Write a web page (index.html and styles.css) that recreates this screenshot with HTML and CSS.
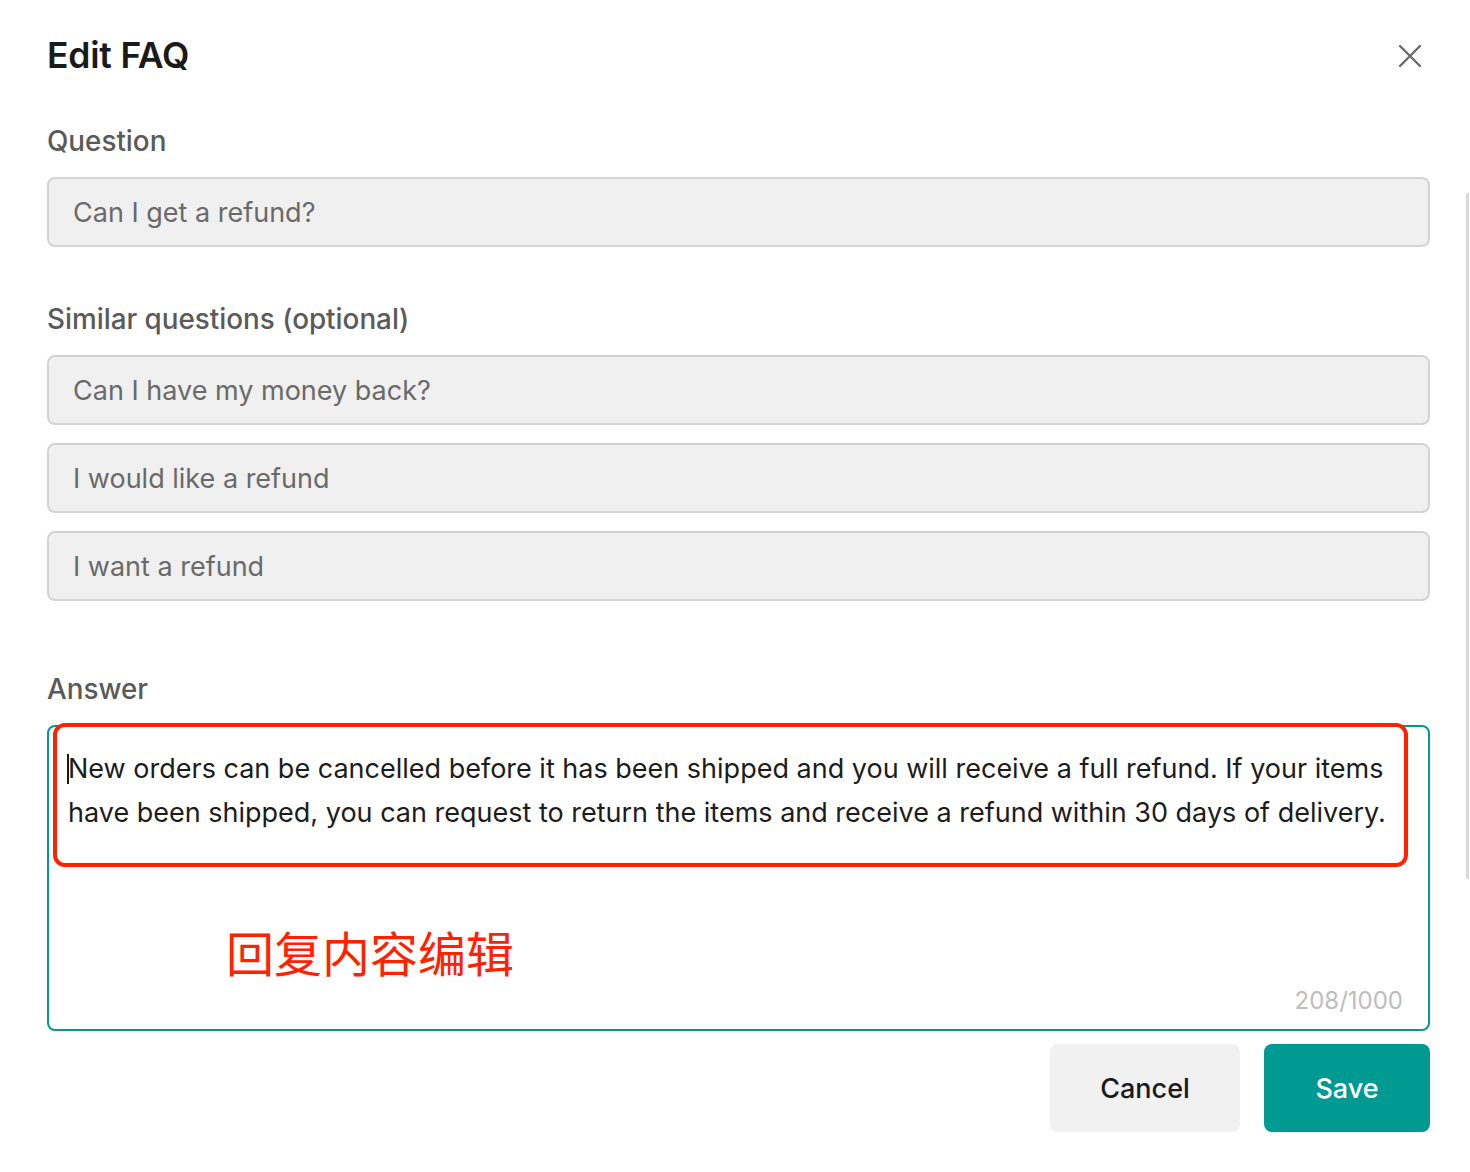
FILE: index.html
```html
<!DOCTYPE html>
<html lang="en">
<head>
<meta charset="utf-8">
<title>Edit FAQ</title>
<link rel="stylesheet" href="styles.css">
</head>
<body>
<div class="modal">
  <header class="modal-header">
    <h1 class="title">Edit FAQ</h1>
    <button class="close" aria-label="Close">
      <svg width="24" height="24" viewBox="0 0 24 24"><path d="M2 2L22 22M22 2L2 22" stroke="#6b6b6b" stroke-width="2.4" stroke-linecap="round" fill="none"/></svg>
    </button>
  </header>

  <div class="field">
    <div class="label">Question</div>
    <div class="input">Can I get a refund?</div>
  </div>

  <div class="field field-similar">
    <div class="label">Similar questions (optional)</div>
    <div class="input-list">
      <div class="input">Can I have my money back?</div>
      <div class="input">I would like a refund</div>
      <div class="input">I want a refund</div>
    </div>
  </div>

  <div class="field field-answer">
    <div class="label">Answer</div>
    <div class="textarea">
      <p class="answer-text"><span class="caret"></span>New orders can be cancelled before it has been shipped and you will receive a full refund. If your items have been shipped, you can request to return the items and receive a refund within 30 days of delivery.</p>
      <div class="counter">208/1000</div>
      <div class="mark-box"></div>
      <div class="mark-note">回复内容编辑</div>
    </div>
  </div>

  <div class="actions">
    <button class="btn btn-cancel">Cancel</button>
    <button class="btn btn-save">Save</button>
  </div>
</div>
<div class="scrollbar"></div>
</body>
</html>
```

FILE: styles.css
```css
* { box-sizing: border-box; }
html, body { margin: 0; padding: 0; background: #fff; }
body {
  font-family: Inter, "Noto Sans", "Liberation Sans", sans-serif;
  color: #1a1a1a;
  width: 1470px;
  height: 1172px;
  overflow: hidden;
  position: relative;
}
.modal {
  padding: 36px 40px 0 47px;
}
.modal-header {
  display: flex;
  align-items: center;
  justify-content: space-between;
  height: 40px;
}
.title {
  margin: 0;
  font-size: 35.5px;
  line-height: 40px;
  font-weight: 600;
  color: #1a1a1a;
  letter-spacing: -0.2px;
}
.close {
  border: 0;
  background: none;
  padding: 0;
  width: 24px;
  height: 24px;
  margin-right: 8px;
  display: flex;
}
.field { margin-top: 47px; }
.field-similar { margin-top: 54px; }
.field-answer { margin-top: 70px; }
.label {
  font-size: 27.8px;
  line-height: 36px;
  font-weight: 500;
  color: #5a5a5a;
  margin-bottom: 18px;
}
.input-list {
  display: flex;
  flex-direction: column;
  gap: 18px;
}
.input {
  height: 70px;
  background: #f0f0f0;
  border: 2px solid #d3d3d3;
  border-radius: 8px;
  padding: 0 24px;
  display: flex;
  align-items: center;
  font-size: 27px;
  color: #6a6a6a;
}
.textarea {
  position: relative;
  height: 306px;
  border: 2px solid #009a93;
  border-radius: 8px;
  padding: 20px 19px 0 19px;
}
.answer-text {
  margin: 0;
  font-size: 27px;
  line-height: 44px;
  color: #1c1c1c;
  position: relative;
}
.caret {
  position: absolute;
  left: -1px;
  top: 7px;
  width: 2px;
  height: 30px;
  background: #1a1a1a;
}
.counter {
  position: absolute;
  right: 25px;
  bottom: 14px;
  font-size: 24px;
  line-height: 28px;
  color: #bdbdbd;
}
.mark-box {
  position: absolute;
  left: 4px;
  top: -4px;
  width: 1355px;
  height: 144px;
  border: 4px solid #ff2200;
  border-radius: 12px;
}
.mark-note {
  position: absolute;
  left: 177px;
  top: 196px;
  font-family: "Noto Sans CJK SC", sans-serif;
  font-size: 48px;
  line-height: 56px;
  color: #ff2200;
}
.actions {
  display: flex;
  justify-content: flex-end;
  gap: 24px;
  margin-top: 13px;
}
.btn {
  height: 88px;
  border: 0;
  border-radius: 8px;
  font-family: Inter, "Noto Sans", sans-serif;
  font-size: 27px;
  font-weight: 500;
}
.btn-cancel {
  width: 190px;
  background: #f1f1f1;
  color: #1a1a1a;
}
.btn-save {
  width: 166px;
  background: #009a93;
  color: #fff;
}
.scrollbar {
  position: absolute;
  left: 1466px;
  top: 193px;
  width: 3px;
  height: 686px;
  background: #d9d9d9;
}
```
